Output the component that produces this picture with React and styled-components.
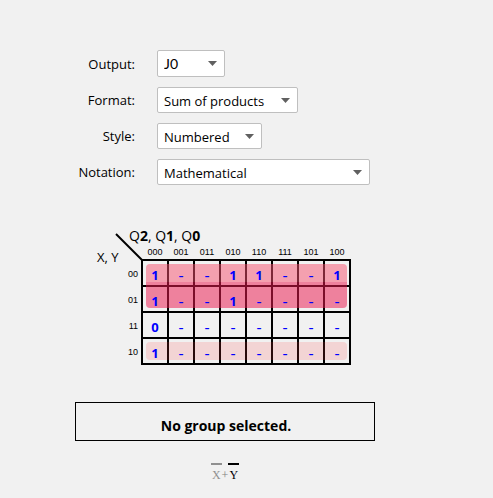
import React from 'react';
import styled, { createGlobalStyle } from 'styled-components';

const GlobalStyle = createGlobalStyle`
  *, *::before, *::after { box-sizing: border-box; }
  body {
    margin: 0;
    background: #f1f1f1;
    color: #000;
    font-family: "Open Sans", "Noto Sans", sans-serif;
    font-size: 13px;
  }
`;

const Page = styled.main`
  display: flex;
  flex-direction: column;
  padding: 50px 75px 16px;
`;

const Form = styled.form`
  display: grid;
  grid-template-columns: 60px 1fr;
  column-gap: 22px;
  row-gap: 10px;
  align-items: center;
`;

const Label = styled.label`
  justify-self: end;
  padding-top: 1px;
  line-height: 25px;
  white-space: nowrap;
`;

const SelectBox = styled.div`
  position: relative;
  justify-self: start;
  width: ${(p) => p.$width}px;
`;

const Select = styled.select`
  display: block;
  width: 100%;
  height: ${(p) => (p.$short ? 27 : 26)}px;
  padding: ${(p) => (p.$short ? 0 : 1)}px 24px 0 6px;
  border: 1px solid #bfbfbf;
  border-radius: 2px;
  background: #fff;
  color: #000;
  font: ${(p) => (p.$short ? '14px Lato, sans-serif' : '13px "Open Sans", "Noto Sans", sans-serif')};
  appearance: none;
`;

const Arrow = styled.svg`
  position: absolute;
  right: 8px;
  top: 11px;
  width: 9px;
  height: 5px;
  fill: #606060;
  pointer-events: none;
`;

const MapArea = styled.section`
  display: grid;
  grid-template-columns: 67px max-content;
  grid-template-rows: 15px max-content;
  margin-top: 46px;
  position: relative;
`;

const RowVariables = styled.div`
  grid-column: 1;
  grid-row: 2;
  align-self: start;
  padding-left: 22px;
  line-height: 22px;
  font-size: 13px;
  white-space: nowrap;
`;

const ColumnVariables = styled.div`
  grid-column: 2;
  grid-row: 1;
  margin-left: -13px;
  margin-top: -3px;
  line-height: 16px;
  font-size: 14px;
`;

const Slash = styled.svg`
  position: absolute;
  left: 40px;
  top: 2px;
  width: 28px;
  height: 28px;
  stroke: #000;
  stroke-width: 2;
`;

const Board = styled.div`
  grid-column: 1 / -1;
  grid-row: 2;
  position: relative;
  justify-self: start;
`;

const Table = styled.table`
  border-collapse: collapse;
  table-layout: fixed;
  width: 276px;
`;

const ColumnCode = styled.th`
  width: 26px;
  height: 14px;
  padding: 0;
  font: 9px/13px "Liberation Sans", sans-serif;
  vertical-align: top;
`;

const Corner = styled.td`
  width: 67px;
  padding: 0;
`;

const RowCode = styled.th`
  padding: 2px 3px 0 0;
  font: 9px/12px "Liberation Sans", sans-serif;
  text-align: right;
`;

const Cell = styled.td`
  height: 26px;
  padding: 4px 0 0;
  border: 2px solid #000;
  text-align: center;
  color: #0000ff;
  font-weight: ${(p) => (p.$open ? 400 : 700)};
  font-size: ${(p) => (p.$open ? 16 : 13)}px;
  line-height: 20px;
`;

const Value = styled.span`
  position: relative;
  z-index: 2;
`;

const Group = styled.div`
  position: absolute;
  z-index: 1;
  left: 71px;
  right: 4px;
  top: ${(p) => p.$top}px;
  height: ${(p) => p.$height}px;
  border-radius: ${(p) => p.$radius};
  background: ${(p) => p.$color};
  pointer-events: none;
`;

const Message = styled.div`
  width: 300px;
  max-width: 100%;
  height: 39px;
  margin-top: 37px;
  padding: 3px 0 0 2px;
  border: 1px solid #000;
  font-size: 14px;
  font-weight: 700;
  line-height: 40px;
  text-align: center;
`;

const Expression = styled.div`
  display: flex;
  justify-content: center;
  width: 300px;
  max-width: 100%;
  margin-top: 22px;
  color: #808080;
  font: 12px/19px "Liberation Serif", serif;
`;

const Negated = styled.span`
  padding: 2px 1px 0;
  border-top: 2px solid currentColor;
  color: ${(p) => (p.$strong ? '#000' : '#909090')};
  line-height: 17px;
`;

const Plus = styled.span`
  padding-top: 4px;
  line-height: 17px;
`;

const fields = [
  { id: 'output', label: 'Output:', value: 'J0', width: 68, short: true },
  { id: 'format', label: 'Format:', value: 'Sum of products', width: 141 },
  { id: 'style', label: 'Style:', value: 'Numbered', width: 105 },
  { id: 'notation', label: 'Notation:', value: 'Mathematical', width: 213 },
];

const columns = ['000', '001', '011', '010', '110', '111', '101', '100'];

const rows = [
  { code: '00', values: '1--11--1' },
  { code: '01', values: '1--1----' },
  { code: '11', values: '0-------' },
  { code: '10', values: '1-------' },
];

export default function App() {
  return (
    <>
      <GlobalStyle />
      <Page>
        <Form>
          {fields.map((f) => (
            <React.Fragment key={f.id}>
              <Label htmlFor={f.id}>{f.label}</Label>
              <SelectBox $width={f.width}>
                <Select id={f.id} $short={f.short}>
                  <option>{f.value}</option>
                </Select>
                <Arrow viewBox="0 0 9 5" aria-hidden="true"><path d="M0 0h9L4.5 5z" /></Arrow>
              </SelectBox>
            </React.Fragment>
          ))}
        </Form>
        <MapArea>
          <RowVariables>X, Y</RowVariables>
          <ColumnVariables>Q<b>2</b>, Q<b>1</b>, Q<b>0</b></ColumnVariables>
          <Slash viewBox="0 0 28 28" aria-hidden="true"><path d="M1 1L27 27" /></Slash>
          <Board>
            <Table>
              <thead>
                <tr>
                  <Corner />
                  {columns.map((c) => <ColumnCode key={c} scope="col">{c}</ColumnCode>)}
                </tr>
              </thead>
              <tbody>
                {rows.map((r) => (
                  <tr key={r.code}>
                    <RowCode scope="row">{r.code}</RowCode>
                    {[...r.values].map((v, i) => (
                      <Cell key={i} $open={v === '-'}><Value>{v}</Value></Cell>
                    ))}
                  </tr>
                ))}
              </tbody>
            </Table>
            <Group $top={18} $height={18} $radius="4px 4px 0 0" $color="rgba(247, 80, 110, 0.5)" />
            <Group $top={36} $height={26} $radius="0 0 4px 4px" $color="rgba(235, 27, 81, 0.52)" />
            <Group $top={96} $height={18} $radius="4px" $color="rgba(255, 60, 60, 0.16)" />
          </Board>
        </MapArea>
        <Message role="status">No group selected.</Message>
        <Expression>
          <Negated>X</Negated>
          <Plus>+</Plus>
          <Negated $strong>Y</Negated>
        </Expression>
      </Page>
    </>
  );
}
